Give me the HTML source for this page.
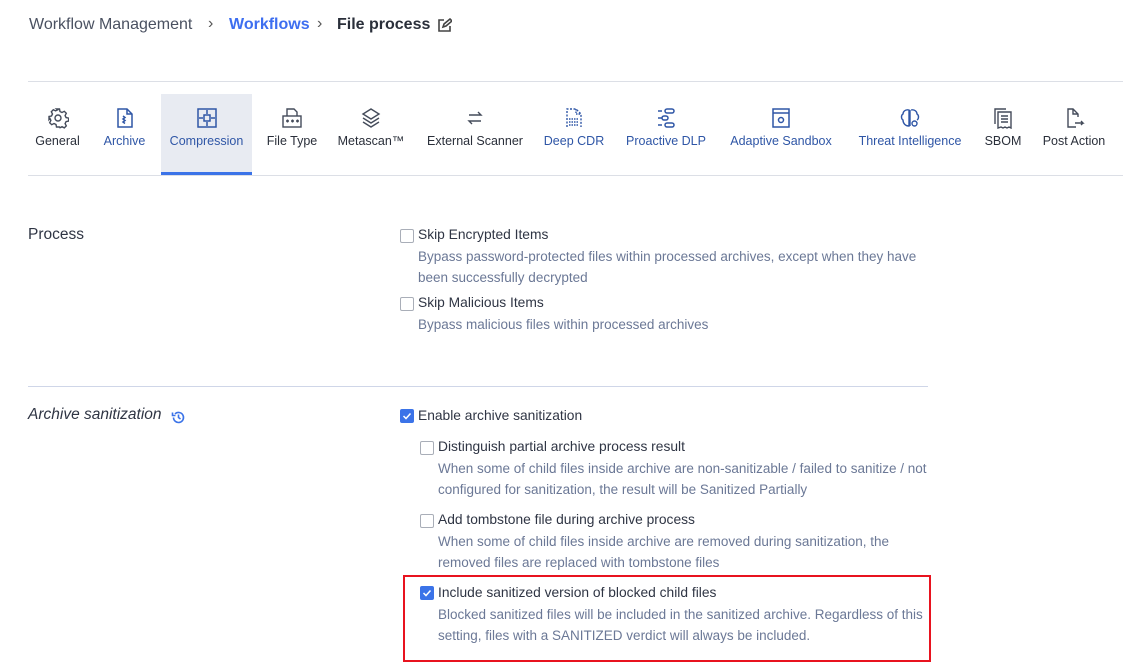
<!DOCTYPE html>
<html><head><meta charset="utf-8"><style>
*{box-sizing:border-box;margin:0;padding:0}
body{width:1123px;height:671px;background:#fff;font-family:"Liberation Sans",sans-serif;color:#2f3544;position:relative;overflow:hidden}
.a{position:absolute;white-space:nowrap}
.tab{position:absolute;top:94px;height:78px;text-align:center;font-size:12.5px}
.tab svg{position:absolute;top:13px;left:50%;margin-left:-11px}
.tab span{position:absolute;top:40px;left:0;right:0}
.blue{color:#2f56a6}
.dk{color:#2a2f3a}
.cb{position:absolute;width:14px;height:14px;border:1px solid #a9aeb8;border-radius:2px;background:#fff}
.cb.on{background:#3b73e8;border-color:#3b73e8}
.lbl{font-size:13.8px;color:#2f3544}
.desc{font-size:13.5px;color:#6b7896;line-height:21px;white-space:normal}
</style></head><body>
<div class="a" style="left:29px;top:16px;font-size:16px;color:#4a5161">Workflow Management</div>
<div class="a" style="left:208px;top:15px;font-size:16px;color:#555">›</div>
<div class="a" style="left:229px;top:16px;font-size:16px;color:#3d6ef0;font-weight:bold">Workflows</div>
<div class="a" style="left:317px;top:15px;font-size:16px;color:#555">›</div>
<div class="a" style="left:337px;top:16px;font-size:16px;color:#2a2f3a;font-weight:bold">File process</div>
<svg class="a" style="left:437px;top:18px" width="15" height="15" viewBox="0 0 15 15" fill="none" stroke="#444" stroke-width="1.6"><path d="M7 2H2v11h11V8"/><path d="M6 9l1-3 6-5 2 2-6 5z"/></svg>

<div class="a" style="left:28px;top:81px;width:1095px;height:1px;background:#dcdfe6"></div>
<div class="a" style="left:28px;top:175px;width:1095px;height:1px;background:#dcdfe6"></div>
<div class="a" style="left:161px;top:94px;width:91px;height:78px;background:#e8ebf2"></div>
<div class="a" style="left:161px;top:172px;width:91px;height:3px;background:#3b73e8"></div>

<div class="tab dk" style="left:30px;width:55px"><svg width="22" height="22" viewBox="0 0 22 22" fill="none" stroke="#444b5a" stroke-width="1.4"><circle cx="11" cy="11" r="3"/><path d="M9.5 2h3l.5 2.5 2 1 2.3-1.2 2 2-1.2 2.3 1 2 2.5.5v3l-2.5.5-1 2 1.2 2.3-2 2-2.3-1.2-2 1L12.5 20h-3l-.5-2.5-2-1-2.3 1.2-2-2 1.2-2.3-1-2L2 12.5v-3l2.5-.5 1-2L4.3 4.7l2-2 2.3 1.2 2-1z"/></svg><span>General</span></div>
<div class="tab blue" style="left:97px;width:55px"><svg width="22" height="22" viewBox="0 0 22 22" fill="none" stroke="#2f56a6" stroke-width="1.5"><path d="M4 2h9l5 5v13H4z"/><path d="M13 2v5h5M9 9l2 1.5L9 12l2 1.5L9 15l2 1.5"/></svg><span>Archive</span></div>
<div class="tab blue" style="left:161px;width:91px"><svg width="22" height="22" viewBox="0 0 22 22" fill="none" stroke="#2f56a6" stroke-width="1.5"><rect x="2" y="2" width="18" height="18"/><rect x="8" y="8" width="6" height="6"/><path d="M11 3v4M11 15v4M3 11h4M15 11h4"/></svg><span>Compression</span></div>
<div class="tab dk" style="left:262px;width:60px"><svg width="22" height="22" viewBox="0 0 22 22" fill="none" stroke="#444b5a" stroke-width="1.4"><path d="M6 9V2h7l3 3v4"/><rect x="2" y="9" width="18" height="11"/><path d="M5 14h3M6.5 12.5v3M10 14h3M11.5 12.5v3M15 14h3M16.5 12.5v3"/></svg><span>File Type</span></div>
<div class="tab dk" style="left:333px;width:76px"><svg width="22" height="22" viewBox="0 0 22 22" fill="none" stroke="#444b5a" stroke-width="1.4"><path d="M11 2l8 5-8 5-8-5z"/><path d="M3 11l8 5 8-5M3 15l8 5 8-5"/></svg><span>Metascan™</span></div>
<div class="tab dk" style="left:420px;width:110px"><svg width="22" height="22" viewBox="0 0 22 22" fill="none" stroke="#444b5a" stroke-width="1.4"><path d="M5 8h12l-3-3M17 14H5l3 3"/></svg><span>External Scanner</span></div>
<div class="tab blue" style="left:540px;width:68px"><svg width="22" height="22" viewBox="0 0 22 22" fill="none" stroke="#2f56a6" stroke-width="1.4"><path d="M4 20V2h9l5 5v13" stroke-dasharray="2 1.5"/><path d="M13 2v5h5M6 12h10M6 15h10M6 18h10" stroke-dasharray="1.5 1"/></svg><span>Deep CDR</span></div>
<div class="tab blue" style="left:618px;width:96px"><svg width="22" height="22" viewBox="0 0 22 22" fill="none" stroke="#2f56a6" stroke-width="1.5"><path d="M3 4h4M3 11h4M3 18h4"/><rect x="10" y="2" width="9" height="4" rx="2"/><rect x="7" y="9" width="6" height="4" rx="2"/><rect x="10" y="16" width="9" height="4" rx="2"/></svg><span>Proactive DLP</span></div>
<div class="tab blue" style="left:724px;width:114px"><svg width="22" height="22" viewBox="0 0 22 22" fill="none" stroke="#2f56a6" stroke-width="1.5"><rect x="3" y="2" width="16" height="18"/><path d="M3 6h16"/><circle cx="11" cy="13" r="2.5"/></svg><span>Adaptive Sandbox</span></div>
<div class="tab blue" style="left:848px;width:124px"><svg width="22" height="22" viewBox="0 0 22 22" fill="none" stroke="#2f56a6" stroke-width="1.4"><path d="M10 3C6 2 4 5 4 7c-2 1-2 5 0 6 0 3 2 6 6 6zM12 3c4-1 6 2 6 4 2 1 2 5 0 6M11 3v16"/><circle cx="15.5" cy="16.5" r="2.5"/></svg><span>Threat Intelligence</span></div>
<div class="tab dk" style="left:980px;width:46px"><svg width="22" height="22" viewBox="0 0 22 22" fill="none" stroke="#444b5a" stroke-width="1.4"><path d="M3 17V2h11"/><path d="M6 5h13v16l-2-1-2 1-2-1-2 1-2-1-3 1z"/><path d="M9 9h7M9 12h7M9 15h7"/></svg><span>SBOM</span></div>
<div class="tab dk" style="left:1036px;width:76px"><svg width="22" height="22" viewBox="0 0 22 22" fill="none" stroke="#444b5a" stroke-width="1.4"><path d="M15 10V7l-5-5H5v18h8"/><path d="M10 2v5h5M12 16h8l-2-2M18 18l2-2"/></svg><span>Post Action</span></div>

<div class="a" style="left:28px;top:226px;font-size:15.5px;color:#2f3544">Process</div>
<div class="cb" style="left:400px;top:229px"></div>
<div class="a lbl" style="left:418px;top:227px">Skip Encrypted Items</div>
<div class="a desc" style="left:418px;top:246px;width:510px">Bypass password-protected files within processed archives, except when they have been successfully decrypted</div>
<div class="cb" style="left:400px;top:297px"></div>
<div class="a lbl" style="left:418px;top:295px">Skip Malicious Items</div>
<div class="a desc" style="left:418px;top:314px">Bypass malicious files within processed archives</div>

<div class="a" style="left:28px;top:386px;width:900px;height:1px;background:#cfd6e8"></div>

<div class="a" style="left:28px;top:406px;font-size:15.5px;font-style:italic;color:#2f3544">Archive sanitization</div>
<svg class="a" style="left:171px;top:410px" width="15" height="15" viewBox="0 0 15 15" fill="none" stroke="#3b73e8" stroke-width="1.6"><path d="M2.5 7.5a5 5 0 1 0 1.5-3.6"/><path d="M1.5 2.5v3h3M7.5 4.5v3l2 1.5"/></svg>

<div class="cb on" style="left:400px;top:409px"></div>
<svg class="a" style="left:402px;top:411px" width="10" height="10" viewBox="0 0 10 10" fill="none" stroke="#fff" stroke-width="1.5"><path d="M1.5 5l2.5 2.5 4.5-5"/></svg>
<div class="a lbl" style="left:418px;top:408px">Enable archive sanitization</div>

<div class="cb" style="left:420px;top:441px"></div>
<div class="a lbl" style="left:438px;top:439px">Distinguish partial archive process result</div>
<div class="a desc" style="left:438px;top:458px;width:500px">When some of child files inside archive are non-sanitizable / failed to sanitize / not configured for sanitization, the result will be Sanitized Partially</div>

<div class="cb" style="left:420px;top:514px"></div>
<div class="a lbl" style="left:438px;top:512px">Add tombstone file during archive process</div>
<div class="a desc" style="left:438px;top:531px;width:480px">When some of child files inside archive are removed during sanitization, the removed files are replaced with tombstone files</div>

<div class="a" style="left:403px;top:575px;width:528px;height:87px;border:2px solid #e8131f"></div>
<div class="cb on" style="left:420px;top:586px"></div>
<svg class="a" style="left:422px;top:588px" width="10" height="10" viewBox="0 0 10 10" fill="none" stroke="#fff" stroke-width="1.5"><path d="M1.5 5l2.5 2.5 4.5-5"/></svg>
<div class="a lbl" style="left:438px;top:585px">Include sanitized version of blocked child files</div>
<div class="a desc" style="left:438px;top:604px;width:490px">Blocked sanitized files will be included in the sanitized archive. Regardless of this setting, files with a SANITIZED verdict will always be included.</div>
</body></html>
